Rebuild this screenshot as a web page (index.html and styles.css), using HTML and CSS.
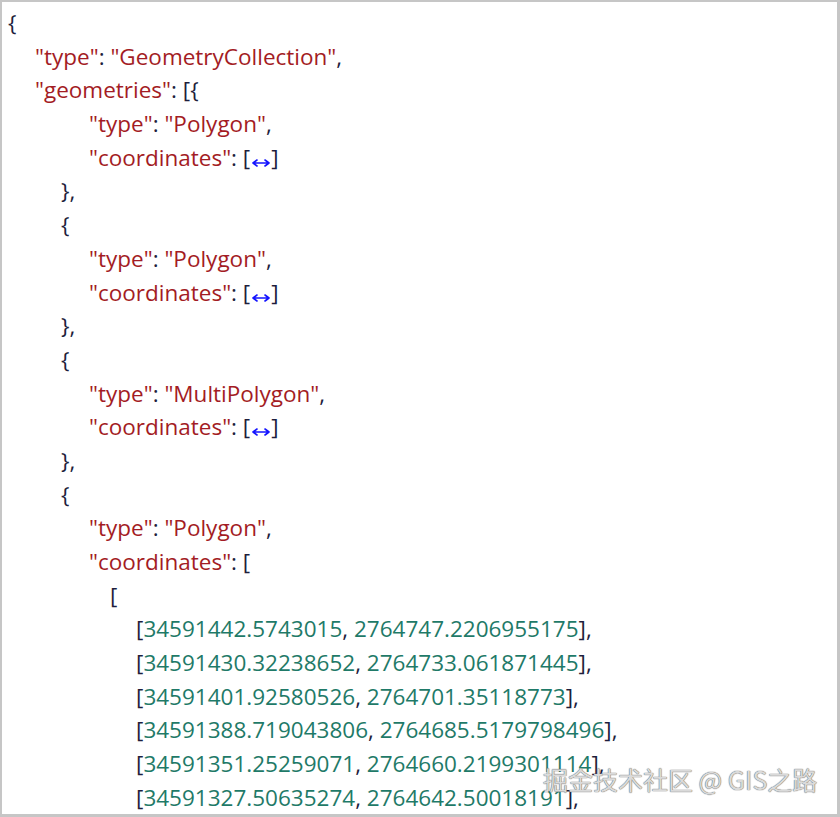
FILE: index.html
```html
<!DOCTYPE html>
<html lang="zh">
<head>
<meta charset="utf-8">
<title>GeoJSON</title>
<link rel="stylesheet" href="styles.css">
</head>
<body>
<div class="frame">
  <div class="json">
    <div class="ln i0"><span class="p">{</span></div>
    <div class="ln i1"><span class="k">"type"</span><span class="p">: </span><span class="s">"GeometryCollection"</span><span class="p">,</span></div>
    <div class="ln i1"><span class="k">"geometries"</span><span class="p">: [{</span></div>
    <div class="ln i3"><span class="k">"type"</span><span class="p">: </span><span class="s">"Polygon"</span><span class="p">,</span></div>
    <div class="ln i3"><span class="k">"coordinates"</span><span class="p">: [</span><svg class="arrow" viewBox="0 0 20 10" width="20" height="10"><path d="M2 5H18M2 5L6 2M2 5L6 8M18 5L14 2M18 5L14 8" /></svg><span class="p">]</span></div>
    <div class="ln i2"><span class="p">},</span></div>
    <div class="ln i2"><span class="p">{</span></div>
    <div class="ln i3"><span class="k">"type"</span><span class="p">: </span><span class="s">"Polygon"</span><span class="p">,</span></div>
    <div class="ln i3"><span class="k">"coordinates"</span><span class="p">: [</span><svg class="arrow" viewBox="0 0 20 10" width="20" height="10"><path d="M2 5H18M2 5L6 2M2 5L6 8M18 5L14 2M18 5L14 8" /></svg><span class="p">]</span></div>
    <div class="ln i2"><span class="p">},</span></div>
    <div class="ln i2"><span class="p">{</span></div>
    <div class="ln i3"><span class="k">"type"</span><span class="p">: </span><span class="s">"MultiPolygon"</span><span class="p">,</span></div>
    <div class="ln i3"><span class="k">"coordinates"</span><span class="p">: [</span><svg class="arrow" viewBox="0 0 20 10" width="20" height="10"><path d="M2 5H18M2 5L6 2M2 5L6 8M18 5L14 2M18 5L14 8" /></svg><span class="p">]</span></div>
    <div class="ln i2"><span class="p">},</span></div>
    <div class="ln i2"><span class="p">{</span></div>
    <div class="ln i3"><span class="k">"type"</span><span class="p">: </span><span class="s">"Polygon"</span><span class="p">,</span></div>
    <div class="ln i3"><span class="k">"coordinates"</span><span class="p">: [</span></div>
    <div class="ln i4"><span class="p">[</span></div>
    <div class="ln i5"><span class="p">[</span><span class="n">34591442.5743015</span><span class="p">, </span><span class="n">2764747.2206955175</span><span class="p">],</span></div>
    <div class="ln i5"><span class="p">[</span><span class="n">34591430.32238652</span><span class="p">, </span><span class="n">2764733.061871445</span><span class="p">],</span></div>
    <div class="ln i5"><span class="p">[</span><span class="n">34591401.92580526</span><span class="p">, </span><span class="n">2764701.35118773</span><span class="p">],</span></div>
    <div class="ln i5"><span class="p">[</span><span class="n">34591388.719043806</span><span class="p">, </span><span class="n">2764685.5179798496</span><span class="p">],</span></div>
    <div class="ln i5"><span class="p">[</span><span class="n">34591351.25259071</span><span class="p">, </span><span class="n">2764660.2199301114</span><span class="p">],</span></div>
    <div class="ln i5"><span class="p">[</span><span class="n">34591327.50635274</span><span class="p">, </span><span class="n">2764642.50018191</span><span class="p">],</span></div>
  </div>
  <div class="watermark">掘金技术社区 @ GIS之路</div>
</div>
</body>
</html>
```

FILE: styles.css
```css
html, body {
  margin: 0;
  padding: 0;
  background: #ffffff;
}

.frame {
  position: relative;
  box-sizing: border-box;
  width: 840px;
  height: 817px;
  border-style: solid;
  border-color: #c6c6c6;
  border-width: 2px 3px 3px 2px;
  overflow: hidden;
  background: #ffffff;
}

.json {
  padding-top: 4px;
  font-family: "Open Sans", "Noto Sans", sans-serif;
  font-size: 22.5px;
  line-height: 33.7px;
  color: #1e1e3c;
}

.ln {
  display: block;
  white-space: pre;
  height: 33.7px;
}
.i0 { padding-left: 6px; }
.i1 { padding-left: 33px; }
.i2 { padding-left: 59px; }
.i3 { padding-left: 87px; }
.i4 { padding-left: 108px; }
.i5 { padding-left: 134px; }

.p { color: #1e1e3c; }
.k { color: #a31c24; }
.s { color: #a31c24; }
.n { color: #1f7a68; }

.arrow {
  display: inline-block;
  vertical-align: -2px;
  margin: 0 0 0 1px;
  fill: none;
  stroke: #1414ff;
  stroke-width: 1.6;
  stroke-linecap: round;
  stroke-linejoin: round;
}

.watermark {
  position: absolute;
  left: 541px;
  top: 760px;
  font-family: "Noto Sans CJK SC", sans-serif;
  font-size: 25px;
  line-height: 34px;
  color: #dadada;
  text-shadow: 0 0 1px #6a6a6a, 0 0 1px #6a6a6a;
  white-space: nowrap;
}
```
